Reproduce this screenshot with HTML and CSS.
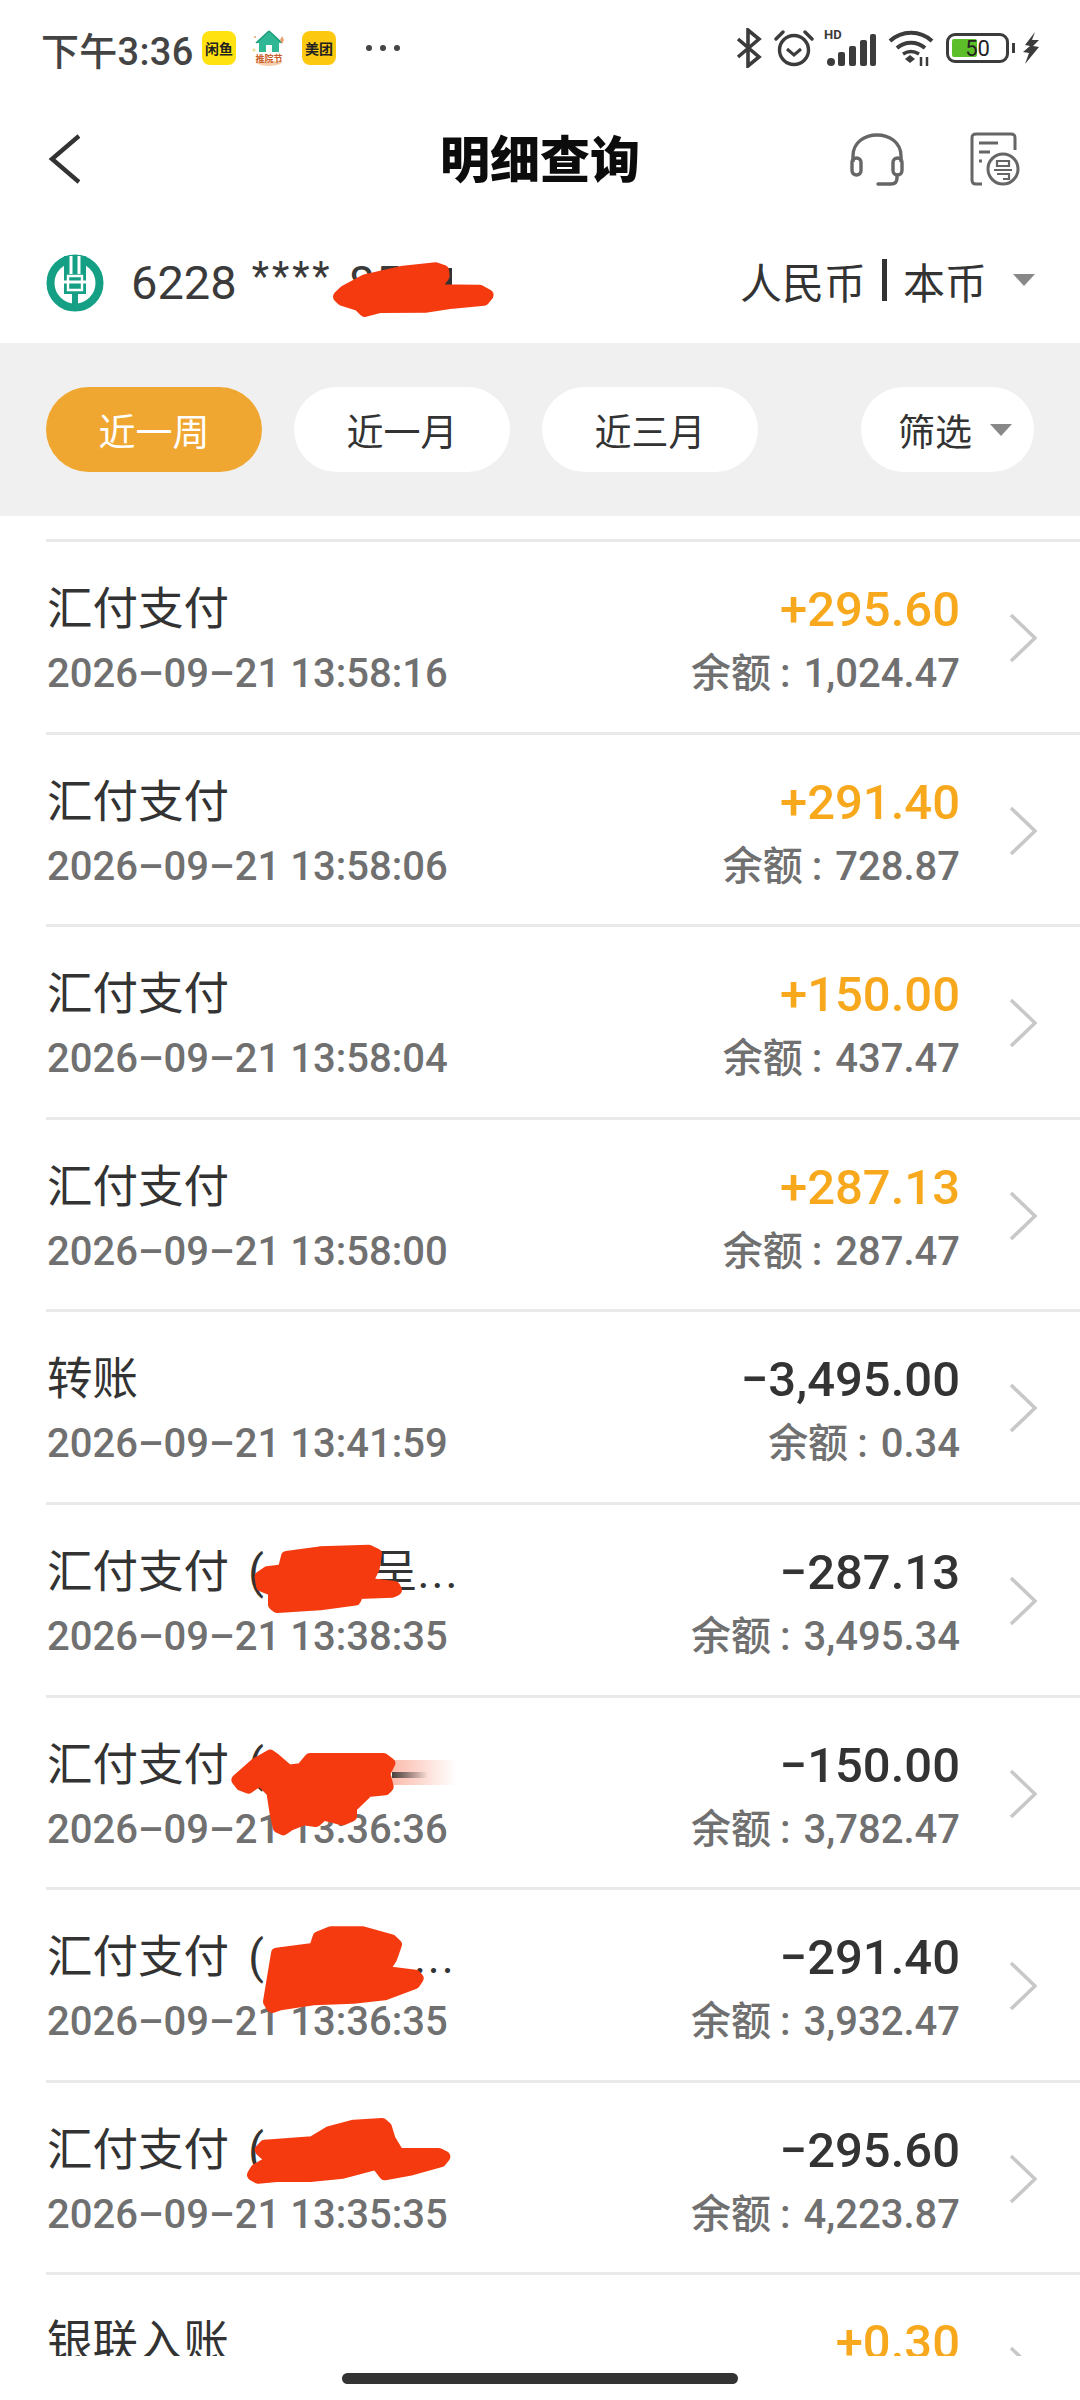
FILE: index.html
```html
<!DOCTYPE html>
<html lang="zh-CN">
<head>
  <meta charset="UTF-8" />
  <meta name="viewport" content="width=device-width, initial-scale=1.0"/>
  <title>明细查询</title>
  <link rel="stylesheet" href="styles.css">
</head>
<body>
  <div class="page">
    <div class="status-bar">
      <div class="status-left">
        <span class="status-time">下午3:36</span>
        <span class="notif-icon notif-xianyu">闲鱼</span>
        <svg class="notif-house" viewBox="0 0 34 36">
          <path d="M17 1 L30 13 H27 V22 H7 V13 H4 Z" fill="#2fb893"/>
          <path d="M17 1 L30 13 M17 1 L4 13" stroke="#1e9c7c" stroke-width="1.5"/>
          <rect x="14" y="15" width="6" height="7" fill="#fff"/>
          <circle cx="3" cy="7" r="1" fill="#e8a070"/>
          <circle cx="2" cy="20" r="1.5" fill="#f2d98a"/>
          <path d="M30 6 L32 10 L30 14 L28 10 Z" fill="#e8a070"/>
          <path d="M4 33 C10 37 24 37 30 33 L30 31 H4 Z" fill="#f6cfae"/>
          <text class="house-label" x="17" y="32" text-anchor="middle">推院节</text>
        </svg>
        <span class="notif-icon notif-meituan">美团</span>
        <span class="status-dots">
          <i></i><i></i><i></i>
        </span>
      </div>
      <div class="status-right">
        <!-- bluetooth -->
        <svg width="26" height="40" viewBox="0 0 26 40" fill="none" stroke="#3c3c3c" stroke-width="3.6">
          <path d="M2 11 L23 29 L12 38 V2 L23 11 L2 29"/>
        </svg>
        <!-- alarm -->
        <svg width="40" height="38" viewBox="0 0 40 38" fill="none" stroke="#3c3c3c" stroke-width="3.4">
          <circle cx="20" cy="21" r="14.5"/>
          <path d="M13 20 L20 26 L27 20" stroke-width="3"/>
          <path d="M2 10 L9 3 M38 10 L31 3" stroke-linecap="round"/>
        </svg>
        <!-- hd + signal -->
        <span class="signal">
          <span class="signal-hd">HD</span>
          <svg width="50" height="32" viewBox="0 0 50 32" fill="#3c3c3c">
            <rect x="1" y="24" width="8" height="8" rx="4"/>
            <rect x="12" y="18" width="7" height="14" rx="2"/>
            <rect x="23" y="12" width="7" height="20" rx="2"/>
            <rect x="34" y="6" width="7" height="26" rx="2"/>
            <rect x="44" y="0" width="6" height="32" rx="2"/>
          </svg>
        </span>
        <!-- wifi -->
        <svg width="46" height="36" viewBox="0 0 46 36" fill="none" stroke="#3c3c3c" stroke-width="4">
          <path d="M2 11 C14 0 32 0 44 11"/>
          <path d="M9 18 C17 11 29 11 37 18"/>
          <path d="M15 24 C20 21 26 21 31 24" stroke-width="3.5"/>
          <path d="M17 29 L22 25 L27 29 L22 33 Z" fill="#3c3c3c" stroke="none"/>
          <path d="M33 36 V27 M39 36 V27" stroke-width="2.5"/>
        </svg>
        <!-- battery -->
        <span class="battery">
          <span class="battery-body">
            <span class="battery-fill"></span>
            <span class="battery-num">50</span>
          </span>
          <span class="battery-cap"></span>
        </span>
        <svg class="bolt" width="18" height="32" viewBox="0 0 18 32" fill="#3c3c3c">
          <path d="M13 0 L3 13 L8 14 L1 20 L7 21 L3 32 L17 15 L11 14 L17 8 L10 8 Z"/>
        </svg>
      </div>
    </div>

    <header class="nav-bar">
      <svg class="nav-back" width="32" height="50" viewBox="0 0 32 50" fill="none" stroke="#333" stroke-width="4.4">
        <path d="M31 2 L4 25 L31 48"/>
      </svg>
      <h1 class="nav-title">明细查询</h1>
      <div class="nav-actions">
        <svg width="54" height="54" viewBox="0 0 54 54" fill="none" stroke="#666" stroke-width="3.4">
          <path d="M3 30 V24 C3 -4 51 -4 51 24 V30"/>
          <rect x="2" y="26" width="9" height="17" rx="4.5"/>
          <rect x="43" y="26" width="9" height="17" rx="4.5"/>
          <path d="M47 43 V46 C47 50 45 52 41 52 H28" stroke-linecap="round"/>
        </svg>
        <svg width="50" height="54" viewBox="0 0 50 54" fill="none" stroke="#666" stroke-width="3">
          <path d="M12 52 H6 C3 52 2 50 2 48 V6 C2 3 3 2 6 2 H41 C44 2 45 3 45 6 V18"/>
          <path d="M9 11 H28 M9 20 H20 M9 29 H12"/>
          <circle cx="33" cy="37" r="15"/>
          <path d="M27 29 H39 V34 H27 Z M24 38 H42 M27 42 H39 V47 H33" stroke-width="2.2"/>
        </svg>
      </div>
    </header>

    <div class="account-row">
      <div class="account-left">
        <svg class="bank-logo" width="58" height="58" viewBox="0 0 58 58">
          <circle cx="29" cy="29" r="24.5" fill="none" stroke="#15a085" stroke-width="8"/>
          <path d="M18 2 H40 V40 H32 V56 H26 V40 H18 Z" fill="#15a085"/>
          <path d="M25 2 V20 M33 2 V20 M18 28 H40" stroke="#fff" stroke-width="3" fill="none"/>
          <path d="M22 22 H36 V36 H22 Z" fill="none" stroke="#fff" stroke-width="2.4"/>
        </svg>
        <span class="account-no">6228</span>
        <span class="account-mask">****</span>
        <span class="account-no">85</span>
      </div>
      <div class="currency">
        <span>人民币</span>
        <span class="currency-sep"></span>
        <span>本币</span>
        <span class="caret currency-caret"></span>
      </div>
    </div>

    <div class="filter-band">
      <div class="chip chip-active">近一周</div>
      <div class="chip">近一月</div>
      <div class="chip">近三月</div>
      <div class="chip chip-filter">筛选<span class="caret"></span></div>
    </div>

    <div class="list">
      <div class="row">
        <div class="row-left">
          <div class="row-title">汇付支付</div>
          <div class="row-date">2026–09–21 13:58:16</div>
        </div>
        <div class="row-right">
          <div class="amount income">+295.60</div>
          <div class="balance">余额<span class="colon">:</span>1,024.47</div>
        </div>
        <svg class="row-arrow" viewBox="0 0 28 50"><path d="M2 2 L26 25 L2 48"/></svg>
      </div>
      <div class="row">
        <div class="row-left">
          <div class="row-title">汇付支付</div>
          <div class="row-date">2026–09–21 13:58:06</div>
        </div>
        <div class="row-right">
          <div class="amount income">+291.40</div>
          <div class="balance">余额<span class="colon">:</span>728.87</div>
        </div>
        <svg class="row-arrow" viewBox="0 0 28 50"><path d="M2 2 L26 25 L2 48"/></svg>
      </div>
      <div class="row">
        <div class="row-left">
          <div class="row-title">汇付支付</div>
          <div class="row-date">2026–09–21 13:58:04</div>
        </div>
        <div class="row-right">
          <div class="amount income">+150.00</div>
          <div class="balance">余额<span class="colon">:</span>437.47</div>
        </div>
        <svg class="row-arrow" viewBox="0 0 28 50"><path d="M2 2 L26 25 L2 48"/></svg>
      </div>
      <div class="row">
        <div class="row-left">
          <div class="row-title">汇付支付</div>
          <div class="row-date">2026–09–21 13:58:00</div>
        </div>
        <div class="row-right">
          <div class="amount income">+287.13</div>
          <div class="balance">余额<span class="colon">:</span>287.47</div>
        </div>
        <svg class="row-arrow" viewBox="0 0 28 50"><path d="M2 2 L26 25 L2 48"/></svg>
      </div>
      <div class="row">
        <div class="row-left">
          <div class="row-title">转账</div>
          <div class="row-date">2026–09–21 13:41:59</div>
        </div>
        <div class="row-right">
          <div class="amount">−3,495.00</div>
          <div class="balance">余额<span class="colon">:</span>0.34</div>
        </div>
        <svg class="row-arrow" viewBox="0 0 28 50"><path d="M2 2 L26 25 L2 48"/></svg>
      </div>
      <div class="row">
        <div class="row-left">
          <div class="row-title">汇付支付 (<span class="hidden-gap"></span>呈<span class="dots">...</span></div>
          <div class="row-date">2026–09–21 13:38:35</div>
        </div>
        <div class="row-right">
          <div class="amount">−287.13</div>
          <div class="balance">余额<span class="colon">:</span>3,495.34</div>
        </div>
        <svg class="row-arrow" viewBox="0 0 28 50"><path d="M2 2 L26 25 L2 48"/></svg>
      </div>
      <div class="row">
        <div class="row-left">
          <div class="row-title">汇付支付 (</div>
          <div class="row-date">2026–09–21 13:36:36</div>
        </div>
        <div class="row-right">
          <div class="amount">−150.00</div>
          <div class="balance">余额<span class="colon">:</span>3,782.47</div>
        </div>
        <svg class="row-arrow" viewBox="0 0 28 50"><path d="M2 2 L26 25 L2 48"/></svg>
      </div>
      <div class="row">
        <div class="row-left">
          <div class="row-title">汇付支付 (<span class="hidden-gap hidden-gap-wide"></span><span class="dots">...</span></div>
          <div class="row-date">2026–09–21 13:36:35</div>
        </div>
        <div class="row-right">
          <div class="amount">−291.40</div>
          <div class="balance">余额<span class="colon">:</span>3,932.47</div>
        </div>
        <svg class="row-arrow" viewBox="0 0 28 50"><path d="M2 2 L26 25 L2 48"/></svg>
      </div>
      <div class="row">
        <div class="row-left">
          <div class="row-title">汇付支付 (</div>
          <div class="row-date">2026–09–21 13:35:35</div>
        </div>
        <div class="row-right">
          <div class="amount">−295.60</div>
          <div class="balance">余额<span class="colon">:</span>4,223.87</div>
        </div>
        <svg class="row-arrow" viewBox="0 0 28 50"><path d="M2 2 L26 25 L2 48"/></svg>
      </div>
      <div class="row">
        <div class="row-left">
          <div class="row-title">银联入账</div>
        </div>
        <div class="row-right">
          <div class="amount income">+0.30</div>
        </div>
        <svg class="row-arrow" viewBox="0 0 28 50"><path d="M2 2 L26 25 L2 48"/></svg>
      </div>
    </div>

    <div class="home-area">
      <div class="home-bar"></div>
    </div>

    <!-- red scribbles painted over the screenshot, coords are 3x around each origin -->
    <svg class="scribbles" viewBox="0 0 1080 2400">
      <defs>
        <linearGradient id="smear" x1="0" x2="1" y1="0" y2="0">
          <stop offset="0" stop-color="#f53a10" stop-opacity="0.35"/>
          <stop offset="1" stop-color="#f53a10" stop-opacity="0"/>
        </linearGradient>
        <linearGradient id="smear-dark" x1="0" x2="1" y1="0" y2="0">
          <stop offset="0" stop-color="#333" stop-opacity="0.9"/>
          <stop offset="1" stop-color="#333" stop-opacity="0"/>
        </linearGradient>
      </defs>
      <rect x="440" y="268" width="12" height="20" fill="#333"/>
      <g class="blob" transform="translate(320 240) scale(0.3333)">
        <path d="M56 170 L75 152 L135 120 L250 94 L348 84 L370 92 L372 108 L340 150 L478 151 L504 165 L492 180 L398 189 L320 201 L180 202 L134 214 L116 196 L66 180 Z"/>
      </g>
      <g class="blob" transform="translate(220 1520) scale(0.3333)">
        <path d="M121 170 L142 156 L190 150 L200 110 L300 96 L446 91 L469 102 L462 145 L440 190 L524 200 L529 210 L516 216 L415 220 L406 240 L300 254 L172 262 L161 254 L161 212 L125 198 Z"/>
      </g>
      <rect x="392" y="1760" width="64" height="25" fill="url(#smear)"/>
      <rect x="392" y="1772" width="36" height="6" fill="url(#smear-dark)"/>
      <g class="blob" transform="translate(220 1730) scale(0.3333)">
        <path d="M51 150 L108 100 L150 76 L165 86 L205 121 L245 116 L270 86 L490 86 L509 100 L494 130 L504 170 L495 179 L444 184 L394 232 L394 258 L368 269 L310 254 L288 274 L250 269 L212 284 L190 299 L175 292 L166 250 L156 186 L120 150 L85 174 L64 166 Z"/>
      </g>
      <g class="blob" transform="translate(220 1910) scale(0.3333)">
        <path d="M146 275 L161 184 L170 130 L284 115 L295 81 L332 66 L428 66 L514 90 L529 104 L515 144 L490 184 L586 196 L594 205 L584 220 L494 254 L400 264 L280 269 L180 284 L156 292 Z"/>
      </g>
      <g class="blob" transform="translate(220 2100) scale(0.3333)">
        <path d="M121 150 L134 136 L276 126 L326 96 L402 76 L486 71 L499 82 L510 118 L536 161 L656 161 L674 170 L662 185 L576 209 L494 224 L470 192 L368 219 L270 229 L170 229 L114 234 L98 225 L108 208 L170 172 L134 162 Z"/>
      </g>
    </svg>
  </div>
</body>
</html>
```

FILE: styles.css
```css
* {
  box-sizing: border-box;
}
body {
  margin: 0;
  padding: 0;
  background: #fff;
  font-family: 'Roboto', 'Noto Sans CJK SC', sans-serif;
  color: #333;
}
.page {
  position: relative;
  width: 1080px;
  height: 2400px;
  display: flex;
  flex-direction: column;
  overflow: hidden;
}

/* status bar */
.status-bar {
  height: 96px;
  display: flex;
  align-items: center;
  justify-content: space-between;
  padding: 0 40px 0 41px;
}
.status-left {
  display: flex;
  align-items: center;
}
.status-time {
  font-size: 38px;
  font-weight: 500;
  letter-spacing: 0.3px;
  color: #444;
  width: 161px;
  white-space: nowrap;
}
.notif-icon {
  width: 34px;
  height: 34px;
  border-radius: 8px;
  display: flex;
  align-items: center;
  justify-content: center;
  font-size: 14px;
  font-weight: 700;
  color: #222;
}
.notif-xianyu {
  background: #ffe20f;
}
.notif-meituan {
  background: #fdc810;
}
.notif-house {
  width: 34px;
  height: 36px;
  margin: 0 16px;
}
.house-label {
  font-size: 9px;
  font-weight: 700;
  fill: #c9602c;
}
.status-dots {
  display: flex;
  gap: 8px;
  margin-left: 30px;
}
.status-dots i {
  width: 6px;
  height: 6px;
  border-radius: 50%;
  background: #444;
}
.status-right {
  display: flex;
  align-items: center;
  gap: 12px;
}
.signal {
  position: relative;
  display: flex;
  align-items: flex-end;
  height: 36px;
}
.signal-hd {
  position: absolute;
  left: -2px;
  top: -3px;
  font-size: 13px;
  font-weight: 700;
  color: #3c3c3c;
}
.battery {
  display: flex;
  align-items: center;
  gap: 3px;
}
.battery-body {
  position: relative;
  width: 63px;
  height: 30px;
  border: 3px solid #3c3c3c;
  border-radius: 9px;
  display: flex;
  align-items: center;
  justify-content: center;
  padding: 2px;
}
.battery-fill {
  position: absolute;
  left: 3px;
  top: 3px;
  bottom: 3px;
  width: 25px;
  background: #5cbf2a;
  border-radius: 2px;
}
.battery-num {
  position: relative;
  font-size: 22px;
  color: #222;
}
.battery-cap {
  width: 3px;
  height: 10px;
  background: #3c3c3c;
}
.bolt {
  margin-left: -5px;
}

/* nav */
.nav-bar {
  position: relative;
  height: 126px;
  display: flex;
  align-items: center;
  justify-content: space-between;
  padding: 0 60px 0 48px;
}
.nav-title {
  position: absolute;
  left: 0;
  right: 0;
  margin: 0 0 6px;
  text-align: center;
  font-size: 50px;
  font-weight: 900;
  color: #0c0c0c;
}
.nav-actions {
  display: flex;
  align-items: center;
  gap: 66px;
}

/* account */
.account-row {
  height: 121px;
  display: flex;
  align-items: center;
  justify-content: space-between;
  padding: 0 45px 0 46px;
}
.account-left {
  display: flex;
  align-items: center;
}
.bank-logo {
  margin-right: 27px;
}
.account-no {
  font-size: 47px;
  color: #3a3a3a;
}
.account-mask {
  font-size: 40px;
  letter-spacing: 3px;
  color: #3a3a3a;
  margin: 0 16px 0 15px;
  position: relative;
  top: -6px;
}
.currency {
  display: flex;
  align-items: center;
  font-size: 42px;
  color: #333;
  margin-bottom: 5px;
}
.currency-sep {
  width: 5px;
  height: 42px;
  background: #333;
  margin: 0 16px;
}
.caret {
  width: 0;
  height: 0;
  border-left: 11px solid transparent;
  border-right: 11px solid transparent;
  border-top: 12px solid #888;
}
.currency-caret {
  margin-left: 26px;
}

/* filter chips */
.filter-band {
  height: 173px;
  background: #f0f0f0;
  display: flex;
  align-items: center;
  padding: 0 46px;
}
.chip {
  width: 216px;
  height: 85px;
  margin-right: 32px;
  border-radius: 43px;
  background: #fff;
  display: flex;
  align-items: center;
  justify-content: center;
  font-size: 37px;
  color: #333;
}
.chip-active {
  background: #f0a732;
  color: #fff;
}
.chip-filter {
  width: 173px;
  margin-right: 0;
  margin-left: auto;
  justify-content: flex-start;
  padding-left: 37px;
  gap: 18px;
}

/* list */
.list {
  flex: 1;
  min-height: 0;
  overflow: hidden;
  padding-top: 23px;
}
.row {
  position: relative;
  height: 192.6px;
  margin-left: 46px;
  padding: 33px 120px 0 1px;
  border-top: 3px solid #e9e9e9;
  display: flex;
  justify-content: space-between;
}
.row-title {
  font-size: 45.5px;
  line-height: 69px;
  color: #333;
  height: 69px;
  white-space: nowrap;
  word-spacing: 8px;
}
.hidden-gap {
  display: inline-block;
  width: 108px;
}
.hidden-gap-wide {
  width: 150px;
}
.dots {
  letter-spacing: 2px;
}
.row-date {
  font-size: 40px;
  font-weight: 500;
  line-height: 60px;
  color: #707070;
}
.row-right {
  text-align: right;
}
.amount {
  font-size: 49px;
  line-height: 69px;
  height: 69px;
  font-weight: 500;
  color: #333;
}
.amount.income {
  color: #f7a81c;
}
.balance {
  font-size: 40px;
  font-weight: 500;
  line-height: 60px;
  color: #707070;
  white-space: pre;
}
.colon {
  margin: 0 13px 0 9px;
}
.row-arrow {
  position: absolute;
  right: 43px;
  top: 71px;
  width: 28px;
  height: 50px;
  fill: none;
  stroke: #c8c8c8;
  stroke-width: 3.5;
}

/* bottom */
.home-area {
  height: 44px;
  flex-shrink: 0;
  background: #fff;
  display: flex;
  justify-content: center;
  padding-top: 17px;
}
.home-bar {
  width: 396px;
  height: 11px;
  border-radius: 6px;
  background: #333;
}
.scribbles {
  position: absolute;
  left: 0;
  top: 0;
  width: 1080px;
  height: 2400px;
  pointer-events: none;
}
.blob path {
  fill: #f53a10;
  stroke: #f53a10;
  stroke-width: 34;
  stroke-linejoin: round;
}
```
